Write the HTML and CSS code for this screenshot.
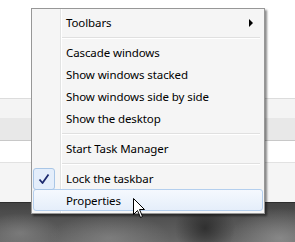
FILE: index.html
```html
<!DOCTYPE html>
<html lang="en">
<head>
    <meta charset="UTF-8">
    <title>Taskbar menu</title>
    <link rel="stylesheet" href="styles.css">
</head>
<body>

    <div class="desk">
        <div class="band band-white"></div>
        <div class="band band-light"></div>
        <div class="band band-grey"></div>
        <div class="band band-row"></div>
        <div class="band band-bar"></div>
        <div class="band band-photo"></div>
    </div>

    <div class="menu">
        <div class="item"><span class="gutter"></span><span class="label">Toolbars</span><span class="arrow"></span></div>
        <div class="sep"></div>
        <div class="item"><span class="gutter"></span><span class="label">Cascade windows</span></div>
        <div class="item"><span class="gutter"></span><span class="label">Show windows stacked</span></div>
        <div class="item"><span class="gutter"></span><span class="label">Show windows side by side</span></div>
        <div class="item"><span class="gutter"></span><span class="label">Show the desktop</span></div>
        <div class="sep"></div>
        <div class="item"><span class="gutter"></span><span class="label">Start Task Manager</span></div>
        <div class="sep"></div>
        <div class="item"><span class="gutter"><span class="check">
            <svg width="12" height="12" viewBox="0 0 12 12"><path d="M1.5 6.5 L4.5 10 L10.5 1.5" fill="none" stroke="#1c2a6e" stroke-width="1.8" stroke-linejoin="round"/></svg>
        </span></span><span class="label">Lock the taskbar</span></div>
        <div class="item hover"><span class="gutter"></span><span class="label">Properties</span></div>
    </div>

    <svg class="pointer" width="13" height="21" viewBox="0 0 13 21">
        <path d="M0.5 0.5 L0.5 16.5 L4.5 12.5 L7.5 19.5 L9.5 18.5 L6.5 11.5 L11.5 11.5 Z" fill="#fff" stroke="#000" stroke-width="1"/>
    </svg>

</body>
</html>
```

FILE: styles.css
```css
body {
    margin: 0;
    width: 295px;
    height: 242px;
    overflow: hidden;
    position: relative;
    font-family: "Noto Sans", "Open Sans", sans-serif;
    font-size: 11.5px;
    letter-spacing: -0.1px;
    color: #000;
    background: #fff;
}

.desk {
    display: flex;
    flex-direction: column;
    height: 242px;
}

.band-white {
    height: 98px;
    background: #fff;
    border-bottom: 1px solid #dcdcdc;
}

.band-light {
    height: 19px;
    background: #f4f4f4;
}

.band-grey {
    height: 22px;
    background: #e8e8e8;
    border-bottom: 1px solid #c8c8c8;
}

.band-row {
    height: 21px;
    background: #fff;
    border-bottom: 1px solid #e2e2e2;
}

.band-bar {
    height: 39px;
    background: #f5f5f5;
    border-bottom: 1px solid #2e2e2e;
}

.band-photo {
    flex: 1;
    background:
        radial-gradient(ellipse 40px 20px at 20px 30px, rgba(140, 140, 140, 0.6), transparent),
        radial-gradient(ellipse 60px 25px at 110px 35px, rgba(150, 150, 150, 0.5), transparent),
        radial-gradient(ellipse 30px 30px at 205px 25px, rgba(30, 30, 30, 0.7), transparent),
        radial-gradient(ellipse 50px 30px at 280px 35px, rgba(160, 160, 160, 0.6), transparent),
        linear-gradient(#444, #666);
}

.menu {
    position: absolute;
    left: 31px;
    top: 8px;
    width: 230px;
    padding: 2px 1px;
    border: 1px solid #979797;
    background: linear-gradient(to right, #f5f5f5 28px, #e2e3e3 28px, #e2e3e3 29px, #fff 29px, #fff 30px, #f5f5f5 30px);
    box-shadow: 2px 2px 2px rgba(0, 0, 0, 0.45);
}

.item {
    display: flex;
    align-items: center;
    height: 22px;
    box-sizing: border-box;
    padding-top: 1px;
}

.gutter {
    width: 27px;
    height: 21px;
    flex: none;
    display: flex;
    align-items: center;
}

.label {
    flex: 1;
    padding-left: 6px;
}

.arrow {
    width: 0;
    height: 0;
    border-top: 4px solid transparent;
    border-bottom: 4px solid transparent;
    border-left: 4px solid #000;
    margin-right: 10px;
}

.sep {
    height: 4px;
    margin: 0 3px 3px 29px;
    border-bottom: 1px solid #e0e0e0;
    box-shadow: 0 1px 0 #fff;
}

.check {
    display: flex;
    align-items: center;
    justify-content: center;
    width: 20px;
    height: 20px;
    border: 1px solid #a9c6e6;
    border-radius: 3px;
    background: #e4eefb;
}

.hover {
    border: 1px solid #b4cfee;
    border-radius: 3px;
    background: linear-gradient(#f5f9fe, #e5eefa);
}

.hover .gutter {
    width: 26px;
}

.pointer {
    position: absolute;
    left: 133px;
    top: 198px;
}
```
